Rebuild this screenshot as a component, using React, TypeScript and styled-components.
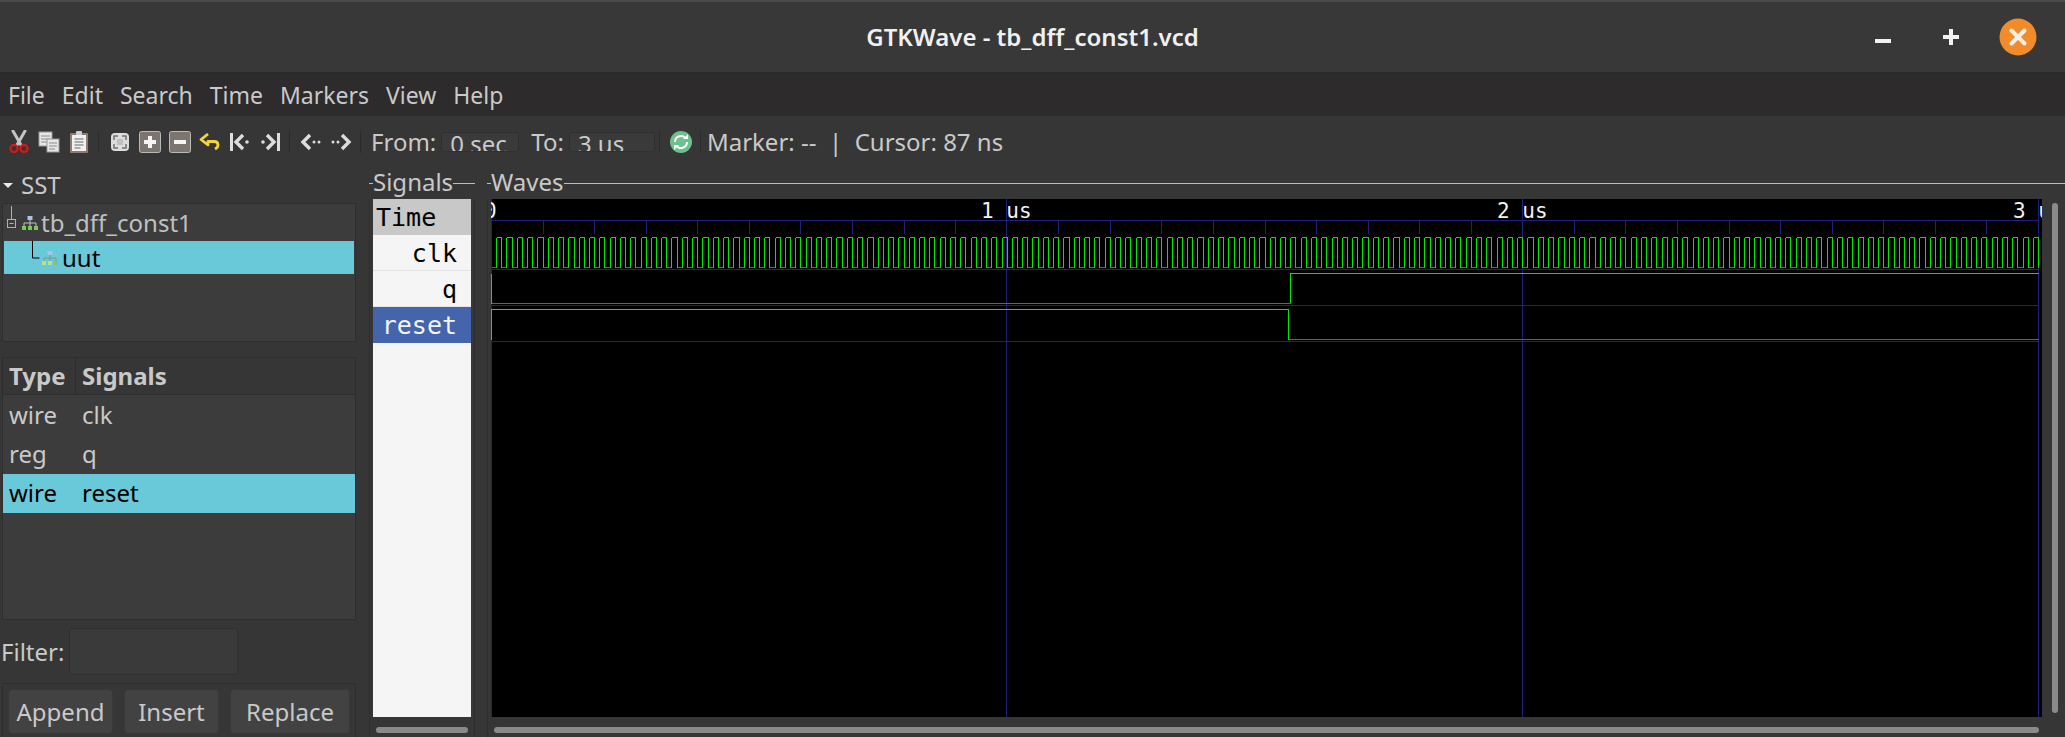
import React from 'react'
import styled, { createGlobalStyle } from 'styled-components'

const uiFont = `"Noto Sans", "Open Sans", sans-serif`
const monoFont = `"DejaVu Sans Mono", "Liberation Mono", monospace`

const GlobalStyle = createGlobalStyle`
  html, body { margin: 0; padding: 0; background: #363636; }
  * { box-sizing: border-box; }
`

const Window = styled.div`
  width: 2065px;
  height: 737px;
  overflow: hidden;
  display: flex;
  flex-direction: column;
  background: #363636;
  color: #c9c9c9;
  font: 24px/30px ${uiFont};
`

const TitleBar = styled.header`
  height: 74px;
  flex: none;
  display: grid;
  grid-template-columns: 1fr auto 1fr;
  align-items: center;
  background: #383838;
  border-top: 2px solid #4c4c4c;
  border-bottom: 2px solid #2a2a2a;
`

const Title = styled.div`
  grid-column: 2;
  color: #f0f0f0;
  font-weight: 600;
  font-size: 24px;
  margin-top: -1px;
`

const WindowControls = styled.div`
  justify-self: end;
  display: flex;
  align-items: center;
  padding-right: 14px;
`

const WindowButton = styled.div<{ $w: number }>`
  width: ${(p) => p.$w}px;
  display: flex;
  justify-content: center;
`

const MenuBar = styled.nav`
  height: 42px;
  flex: none;
  display: flex;
  align-items: center;
  gap: 17px;
  padding-left: 8px;
  background: #2d2b2c;
  font-size: 23px;
`

const Toolbar = styled.div`
  height: 51px;
  flex: none;
  display: flex;
  align-items: center;
  padding-left: 4px;
`

const ToolButton = styled.div`
  width: 30px;
  height: 30px;
  display: flex;
  align-items: center;
  justify-content: center;
`

const ToolSep = styled.div`
  width: 1px;
  height: 22px;
  margin: 0 6px 0 4px;
  background: #2b2b2b;
`

const ToolLabel = styled.span<{ $ml?: number }>`
  margin-left: ${(p) => p.$ml ?? 0}px;
  white-space: pre;
`

const TimeField = styled.div<{ $w: number }>`
  width: ${(p) => p.$w}px;
  height: 20px;
  margin-left: 5px;
  padding-left: 8px;
  overflow: hidden;
  background: #3a3a3a;
  border: 1px solid #303030;
  border-radius: 3px;
  line-height: 21px;
  white-space: pre;
`

const Content = styled.main`
  flex: 1;
  min-height: 0;
  display: flex;
`

const LeftPane = styled.section`
  width: 358px;
  flex: none;
  display: flex;
  flex-direction: column;
`

const Expander = styled.div`
  height: 36px;
  flex: none;
  display: flex;
  align-items: center;
  gap: 8px;
  padding-left: 3px;
`

const Caret = styled.span`
  width: 0;
  height: 0;
  border-left: 5px solid transparent;
  border-right: 5px solid transparent;
  border-top: 5px solid #e8e8e8;
`

const TreeBox = styled.div`
  height: 139px;
  margin: 0 2px 15px;
  padding: 1px;
  background: #3c3c3c;
  border: 1px solid #2e2e2e;
`

const TreeRow = styled.div<{ $selected?: boolean; $h: number }>`
  height: ${(p) => p.$h}px;
  display: flex;
  align-items: center;
  background: ${(p) => (p.$selected ? '#69c9d9' : 'transparent')};
  color: ${(p) => (p.$selected ? '#000' : '#c0c0c0')};
`

const SignalTable = styled.div`
  height: 263px;
  margin: 0 2px 8px;
  background: #3c3c3c;
  border: 1px solid #2e2e2e;
`

const TableRow = styled.div<{ $selected?: boolean }>`
  height: 39.3px;
  display: grid;
  grid-template-columns: 73px 1fr;
  align-items: center;
  background: ${(p) => (p.$selected ? '#69c9d9' : 'transparent')};
  color: ${(p) => (p.$selected ? '#000' : '#c9c9c9')};
`

const TableHead = styled(TableRow)`
  height: 37px;
  align-items: stretch;
  background: #363636;
  border-bottom: 1px solid #2e2e2e;
  font-weight: 700;
`

const Cell = styled.div`
  padding-left: 6px;
`

const HeadCell = styled(Cell)<{ $divider?: boolean }>`
  display: flex;
  align-items: center;
  border-right: ${(p) => (p.$divider ? '1px solid #2e2e2e' : 'none')};
`

const FilterRow = styled.div`
  height: 47px;
  flex: none;
  display: flex;
  align-items: center;
  gap: 5px;
  padding-left: 1px;
  margin-bottom: 8px;
`

const FilterInput = styled.div`
  width: 169px;
  height: 47px;
  background: #3a3a3a;
  border: 1px solid #303030;
  border-radius: 3px;
`

const ButtonBar = styled.div`
  flex: 1;
  display: flex;
  gap: 11px;
  margin: 0 2px;
  padding: 5px 5px 0;
  border: 1px solid #2e2e2e;
  border-bottom: none;
`

const ActionButton = styled.div<{ $w: number }>`
  width: ${(p) => p.$w}px;
  height: 45px;
  display: flex;
  align-items: center;
  justify-content: center;
  background: #424242;
  border: 1px solid #383838;
  border-radius: 4px;
`

const Frame = styled.section<{ $grow?: boolean; $ml: number; $w?: number }>`
  margin-left: ${(p) => p.$ml}px;
  flex: ${(p) => (p.$grow ? '1' : 'none')};
  width: ${(p) => (p.$w ? `${p.$w}px` : 'auto')};
  min-width: 0;
  display: flex;
  flex-direction: column;
`

const FrameHead = styled.div`
  height: 32px;
  flex: none;
  display: flex;
  align-items: center;
  padding-bottom: 3px;
`

const FrameTick = styled.span`
  width: 4px;
  height: 1px;
  margin-top: 4px;
  background: #bdbdbd;
`

const FrameLine = styled.span`
  flex: 1;
  height: 1px;
  margin-top: 4px;
  background: #bdbdbd;
`

const SignalsBody = styled.div`
  flex: 1;
  padding: 0 3px;
  border-left: 1px solid #2e2e2e;
  border-right: 1px solid #2e2e2e;
`

const SignalList = styled.div`
  height: 518px;
  background: #f5f5f5;
  font: 25px/35px ${monoFont};
  color: #000;
`

const SignalRow = styled.div<{ $kind?: 'time' | 'selected' }>`
  height: 36px;
  padding: 0 14px 0 3px;
  text-align: ${(p) => (p.$kind === 'time' ? 'left' : 'right')};
  line-height: 38px;
  background: ${(p) =>
    p.$kind === 'time' ? '#c8c8c8' : p.$kind === 'selected' ? '#4464ac' : 'transparent'};
  color: ${(p) => (p.$kind === 'selected' ? '#f4f4f4' : '#000')};
  border-bottom: ${(p) => (p.$kind ? 'none' : '1px solid #e4e4e4')};
`

const HScroll = styled.div<{ $ml: number; $w: number }>`
  width: ${(p) => p.$w}px;
  height: 6px;
  margin: 10px 0 0 ${(p) => p.$ml}px;
  border-radius: 3px;
  background: #8a8a8a;
`

const WavesBody = styled.div`
  flex: 1;
  display: grid;
  grid-template-columns: 1551px 1fr;
  grid-template-rows: 518px 1fr;
  padding-left: 3px;
  border-left: 1px solid #2e2e2e;
`

const WaveCanvas = styled.svg`
  display: block;
  background: #000;
`

const VScroll = styled.div`
  width: 6px;
  height: 510px;
  margin: 4px 0 0 10px;
  border-radius: 3px;
  background: #8a8a8a;
`

const MINUS = (
  <svg width="16" height="12" viewBox="0 0 16 12">
    <rect x="0" y="8" width="16" height="4" fill="#f2f2f2" />
  </svg>
)

// 1 us is 515.67 px on the canvas
const X0 = 491
const usToX = (t: number) => Math.round(X0 + t * 515.67)
const GRID = '#20207c'
const HIGH = '#00ea00'
const LOW = '#00a800'

function Waves() {
  const ticks: React.ReactNode[] = []
  for (let i = 1; i < 30; i++) {
    if (i % 10 === 0) continue
    const x = usToX(i / 10) + 0.5
    ticks.push(<line key={i} x1={x} x2={x} y1={220} y2={234} stroke={GRID} />)
  }

  const clk: React.ReactNode[] = []
  for (let k = 0; k < 150; k++) {
    const fall = usToX(k * 0.02) + 0.5
    const rise = usToX((k + 0.5) * 0.02) + 0.5
    const nextFall = usToX((k + 1) * 0.02) + 0.5
    clk.push(
      <g key={k}>
        <line x1={fall} x2={rise} y1={267.5} y2={267.5} stroke={LOW} />
        <line x1={rise} x2={rise} y1={237.5} y2={267.5} stroke={HIGH} />
        <line x1={rise} x2={nextFall} y1={237.5} y2={237.5} stroke={HIGH} />
        <line x1={nextFall} x2={nextFall} y1={237.5} y2={267.5} stroke={HIGH} />
      </g>,
    )
  }

  return (
    <WaveCanvas width="1551" height="518" viewBox="491 199 1551 518" shapeRendering="crispEdges">
      {[491.5, 1006.5, 1522.5, 2038.5].map((x) => (
        <line key={x} x1={x} x2={x} y1={199} y2={717} stroke={GRID} />
      ))}
      {[220.5, 269.5, 305.5, 341.5].map((y) => (
        <line key={y} x1={491} x2={2039} y1={y} y2={y} stroke={GRID} />
      ))}
      {ticks}
      {clk}
      <path d="M491.5 273.5V303.5H1290.5V273.5H2039" fill="none" stroke={HIGH} />
      <path d="M491.5 303.5H1290.5" fill="none" stroke={LOW} />
      <path d="M491.5 339.5V309.5H1288.5V339.5" fill="none" stroke={HIGH} />
      <path d="M1288.5 339.5H2039" fill="none" stroke={LOW} />
      <g fill="#f2f2f2" fontFamily={monoFont} fontSize="21" shapeRendering="auto">
        <text x="484" y="218">0</text>
        <text x="981" y="218">1 us</text>
        <text x="1497" y="218">2 us</text>
        <text x="2013" y="218">3 us</text>
      </g>
    </WaveCanvas>
  )
}

const Scissors = () => (
  <svg width="20" height="24" viewBox="0 0 20 24">
    <path d="M4 1l8 14M16 1L8 15" stroke="#c4c4c4" strokeWidth="3" fill="none" strokeLinecap="round" />
    <circle cx="5" cy="18.5" r="3.6" fill="none" stroke="#e01515" strokeWidth="2.2" />
    <circle cx="15" cy="18.5" r="3.6" fill="none" stroke="#e01515" strokeWidth="2.2" />
  </svg>
)

const Copy = () => (
  <svg width="22" height="22" viewBox="0 0 22 22">
    <rect x="1" y="1" width="13" height="14" fill="#e6e6e6" stroke="#9a9a9a" />
    <path d="M3 5h9M3 8h9M3 11h7" stroke="#8a8a8a" />
    <rect x="9" y="8" width="12" height="13" fill="#e6e6e6" stroke="#9a9a9a" />
    <path d="M11 12h8M11 15h8M11 18h6" stroke="#8a8a8a" />
  </svg>
)

const Paste = () => (
  <svg width="20" height="24" viewBox="0 0 20 24">
    <rect x="1" y="3" width="18" height="20" rx="1" fill="#8f7b70" />
    <rect x="3" y="5" width="14" height="16" fill="#f0f0f0" />
    <rect x="7" y="1" width="6" height="4" rx="1" fill="#cfcfcf" />
    <path d="M5.5 9h9M5.5 12h9M5.5 15h9M5.5 18h6" stroke="#666" />
  </svg>
)

const ZoomFit = () => (
  <svg width="20" height="20" viewBox="0 0 20 20">
    <rect x="1" y="1" width="18" height="18" rx="4" fill="#dcdcdc" />
    <path d="M4 8V4h4M12 4h4v4M16 12v4h-4M8 16H4v-4" fill="none" stroke="#707070" strokeWidth="1.5" />
    <rect x="7" y="7" width="6" height="6" fill="#c0c0c0" />
  </svg>
)

const BoxIcon = ({ plus }: { plus?: boolean }) => (
  <svg width="22" height="22" viewBox="0 0 22 22">
    <rect x="0.5" y="0.5" width="21" height="21" rx="2" fill="#7b746f" stroke="#bdb9b5" />
    <rect x="5" y="9" width="12" height="4" fill="#f4f4f4" />
    {plus && <rect x="9" y="5" width="4" height="12" fill="#f4f4f4" />}
  </svg>
)

const Undo = () => (
  <svg width="22" height="18" viewBox="0 0 22 18">
    <path d="M9 1L2 6.5 9 12V8.5h6c3 0 4 1.500 4 3.500s-1 3-3 4" fill="none" stroke="#f0d638" strokeWidth="2.800" strokeLinejoin="round" />
  </svg>
)

const Arrow = ({ dir, bar }: { dir: 'l' | 'r'; bar?: boolean }) => (
  <svg width="22" height="20" viewBox="0 0 22 20">
    <g transform={dir === 'r' ? 'matrix(-1 0 0 1 22 0)' : undefined}>
      {bar && <rect x="1" y="1" width="3" height="18" fill="#dddddd" />}
      <path d={bar ? 'M14 3L7 10l7 7' : 'M10 3L3 10l7 7'} fill="none" stroke="#dddddd" strokeWidth="3.400" />
      {bar ? (
        <circle cx="18" cy="10" r="1.800" fill="#dddddd" />
      ) : (
        <>
          <circle cx="14" cy="10" r="1.500" fill="#dddddd" />
          <circle cx="19" cy="10" r="1.500" fill="#dddddd" />
        </>
      )}
    </g>
  </svg>
)

const Refresh = () => (
  <svg width="22" height="22" viewBox="0 0 22 22">
    <circle cx="11" cy="11" r="11" fill="#6cc18c" />
    <path d="M5 11a6 6 0 0 1 10-4.500" fill="none" stroke="#fff" strokeWidth="2" />
    <path d="M17 11a6 6 0 0 1-10 4.500" fill="none" stroke="#fff" strokeWidth="2" />
    <path d="M13 8h5V3zM9 14H4v5z" fill="#fff" />
  </svg>
)

const TreeMark = ({ dim }: { dim?: boolean }) => (
  <svg width="16" height="14" viewBox="0 0 16 14">
    <rect x="5.500" y="0" width="5" height="4" fill="#a8c4ee" />
    <path d="M8 4v3M2 10V7h12v3M8 7v3" stroke={dim ? '#7a9a7a' : '#c0c0c0'} fill="none" />
    <rect x="0" y="10" width="4" height="4" fill={dim ? '#b6e08a' : '#7ac760'} />
    <rect x="6" y="10" width="4" height="4" fill={dim ? '#b6e08a' : '#7ac760'} />
    <rect x="12" y="10" width="4" height="4" fill={dim ? '#8cc070' : '#7ac760'} />
  </svg>
)

const TreeGuideTop = () => (
  <svg width="18" height="36" viewBox="0 0 18 36">
    <path d="M7.500 1v13" stroke="#b0b0b0" fill="none" />
    <rect x="3.500" y="14.500" width="8" height="8" fill="none" stroke="#b0b0b0" />
    <path d="M5.500 18.500h4" stroke="#b0b0b0" />
  </svg>
)

const TreeGuideChild = () => (
  <svg width="38" height="33" viewBox="0 0 38 33">
    <path d="M28.500 0v17h7" stroke="#000" fill="none" />
  </svg>
)

const Plus = () => (
  <svg width="16" height="16" viewBox="0 0 16 16">
    <path d="M0 6h6V0h4v6h6v4h-6v6H6v-6H0z" fill="#f2f2f2" />
  </svg>
)

const Close = () => (
  <svg width="38" height="38" viewBox="0 0 38 38">
    <circle cx="19" cy="19" r="18.500" fill="#f28b2c" />
    <path d="M12.500 12.500l13 13M25.500 12.500l-13 13" stroke="#f6f0e8" strokeWidth="4" strokeLinecap="round" />
  </svg>
)

const menuItems = ['File', 'Edit', 'Search', 'Time', 'Markers', 'View', 'Help']

export default function App() {
  return (
    <Window>
      <GlobalStyle />
      <TitleBar>
        <Title>GTKWave - tb_dff_const1.vcd</Title>
        <WindowControls>
          <WindowButton $w={68}>{MINUS}</WindowButton>
          <WindowButton $w={68}><Plus /></WindowButton>
          <WindowButton $w={66}><Close /></WindowButton>
        </WindowControls>
      </TitleBar>
      <MenuBar>
        {menuItems.map((m) => (
          <span key={m}>{m}</span>
        ))}
      </MenuBar>
      <Toolbar>
        <ToolButton><Scissors /></ToolButton>
        <ToolButton><Copy /></ToolButton>
        <ToolButton><Paste /></ToolButton>
        <ToolSep />
        <ToolButton><ZoomFit /></ToolButton>
        <ToolButton><BoxIcon plus /></ToolButton>
        <ToolButton><BoxIcon /></ToolButton>
        <ToolButton><Undo /></ToolButton>
        <ToolButton><Arrow dir="l" bar /></ToolButton>
        <ToolButton><Arrow dir="r" bar /></ToolButton>
        <ToolSep />
        <ToolButton><Arrow dir="l" /></ToolButton>
        <ToolButton><Arrow dir="r" /></ToolButton>
        <ToolSep />
        <ToolLabel $ml={4}>From:</ToolLabel>
        <TimeField $w={78}>0 sec</TimeField>
        <ToolLabel $ml={12}>To:</ToolLabel>
        <TimeField $w={86}>3 us</TimeField>
        <ToolSep />
        <ToolButton><Refresh /></ToolButton>
        <ToolSep />
        <ToolLabel>Marker: --  |  Cursor: 87 ns</ToolLabel>
      </Toolbar>
      <Content>
        <LeftPane>
          <Expander>
            <Caret />
            SST
          </Expander>
          <TreeBox>
            <TreeRow $h={36}>
              <TreeGuideTop />
              <TreeMark />
              <span style={{ marginLeft: 3 }}>tb_dff_const1</span>
            </TreeRow>
            <TreeRow $h={33} $selected>
              <TreeGuideChild />
              <TreeMark dim />
              <span style={{ marginLeft: 4 }}>uut</span>
            </TreeRow>
          </TreeBox>
          <SignalTable>
            <TableHead>
              <HeadCell $divider>Type</HeadCell>
              <HeadCell>Signals</HeadCell>
            </TableHead>
            <TableRow><Cell>wire</Cell><Cell>clk</Cell></TableRow>
            <TableRow><Cell>reg</Cell><Cell>q</Cell></TableRow>
            <TableRow $selected><Cell>wire</Cell><Cell>reset</Cell></TableRow>
          </SignalTable>
          <FilterRow>
            Filter:
            <FilterInput />
          </FilterRow>
          <ButtonBar>
            <ActionButton $w={105}>Append</ActionButton>
            <ActionButton $w={95}>Insert</ActionButton>
            <ActionButton $w={120}>Replace</ActionButton>
          </ButtonBar>
        </LeftPane>
        <Frame $ml={11} $w={106}>
          <FrameHead>
            <FrameTick />
            Signals
            <FrameLine />
          </FrameHead>
          <SignalsBody>
            <SignalList>
              <SignalRow $kind="time">Time</SignalRow>
              <SignalRow>clk</SignalRow>
              <SignalRow>q</SignalRow>
              <SignalRow $kind="selected">reset</SignalRow>
            </SignalList>
            <HScroll $ml={3} $w={92} />
          </SignalsBody>
        </Frame>
        <Frame $ml={12} $grow>
          <FrameHead>
            <FrameTick />
            Waves
            <FrameLine />
          </FrameHead>
          <WavesBody>
            <Waves />
            <VScroll />
            <HScroll $ml={3} $w={1545} />
          </WavesBody>
        </Frame>
      </Content>
    </Window>
  )
}
